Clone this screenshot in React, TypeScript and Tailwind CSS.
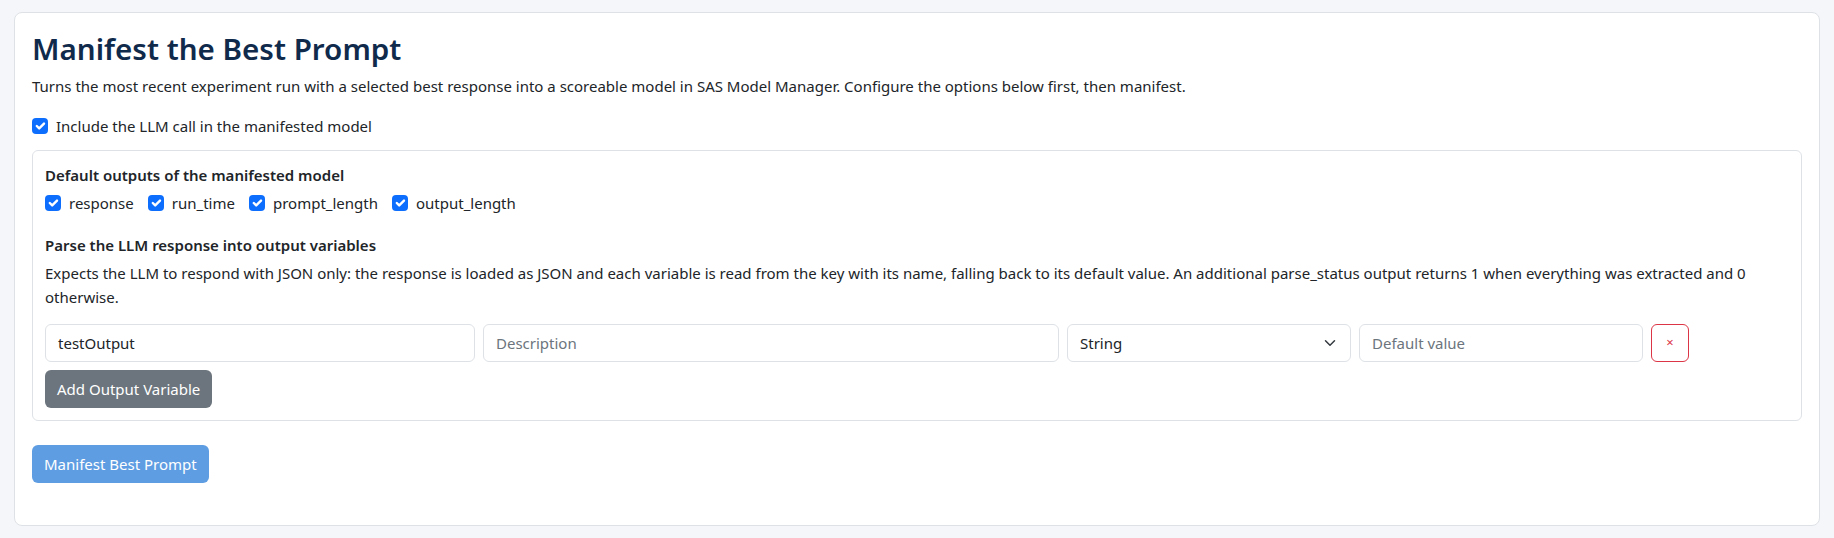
import React from "react";

function Check() {
  return (
    <span className="flex h-4 w-4 shrink-0 items-center justify-center rounded-[4px] bg-[#0d6efd]">
      <svg viewBox="0 0 20 20" className="h-4 w-4" fill="none">
        <path
          d="m6 10 3 3 6-6"
          stroke="#fff"
          strokeWidth="3"
          strokeLinecap="round"
          strokeLinejoin="round"
        />
      </svg>
    </span>
  );
}

const outputs = ["response", "run_time", "prompt_length", "output_length"];

export default function App() {
  return (
    <div className="min-h-screen bg-[#f5f6fa] px-[14px] pt-3 font-['Noto_Sans',sans-serif] text-[15px] text-[#212529]">
      <div className="rounded-lg border border-[#dee2e6] bg-white px-[17px] pt-[17px] pb-[42px]">
        <h2 className="mb-[6px] text-[29.6px] leading-[38px] font-semibold text-[#102a4c]">
          Manifest the Best Prompt
        </h2>
        <p className="mb-4 leading-6">
          Turns the most recent experiment run with a selected best response into a scoreable
          model in SAS Model Manager. Configure the options below first, then manifest.
        </p>
        <label className="mb-3 flex items-center gap-2 leading-6">
          <Check />
          <span>Include the LLM call in the manifested model</span>
        </label>

        <div className="rounded-md border border-[#dee2e6] p-3">
          <div className="mb-1 leading-6 font-semibold">Default outputs of the manifested model</div>
          <div className="mb-[18px] flex items-center leading-6">
            {outputs.map((o) => (
              <label key={o} className="mr-[14px] flex items-center gap-2">
                <Check />
                <span>{o}</span>
              </label>
            ))}
          </div>

          <div className="mb-1 leading-6 font-semibold">Parse the LLM response into output variables</div>
          <p className="mb-[15px] leading-6">
            Expects the LLM to respond with JSON only: the response is loaded as JSON and each
            variable is read from the key with its name, falling back to its default value. An
            additional parse_status output returns 1 when everything was extracted and 0
            otherwise.
          </p>

          <div className="grid grid-cols-12 gap-2">
            <div className="col-span-3 flex h-[38px] items-center rounded-md border border-[#dee2e6] px-3">
              testOutput
            </div>
            <div className="col-span-4 flex h-[38px] items-center rounded-md border border-[#dee2e6] px-3 text-[#6c757d]">
              Description
            </div>
            <div className="col-span-2 flex h-[38px] items-center justify-between rounded-md border border-[#dee2e6] pr-3 pl-3">
              <span>String</span>
              <svg viewBox="0 0 16 16" className="h-3 w-4" fill="none">
                <path
                  d="m2 5 6 6 6-6"
                  stroke="#343a40"
                  strokeWidth="2"
                  strokeLinecap="round"
                  strokeLinejoin="round"
                />
              </svg>
            </div>
            <div className="col-span-2 flex h-[38px] items-center rounded-md border border-[#dee2e6] px-3 text-[#6c757d]">
              Default value
            </div>
            <div className="col-span-1">
              <button className="flex h-[38px] w-[38px] items-center justify-center rounded-md border border-[#dc3545] text-[13px] text-[#dc3545]">
                ×
              </button>
            </div>
          </div>

          <button className="mt-2 rounded-md bg-[#6c757d] px-3 py-[7px] leading-6 text-white">
            Add Output Variable
          </button>
        </div>

        <button className="mt-6 rounded-md bg-[#5e9de2] px-3 py-[7px] leading-6 text-white">
          Manifest Best Prompt
        </button>
      </div>
    </div>
  );
}
